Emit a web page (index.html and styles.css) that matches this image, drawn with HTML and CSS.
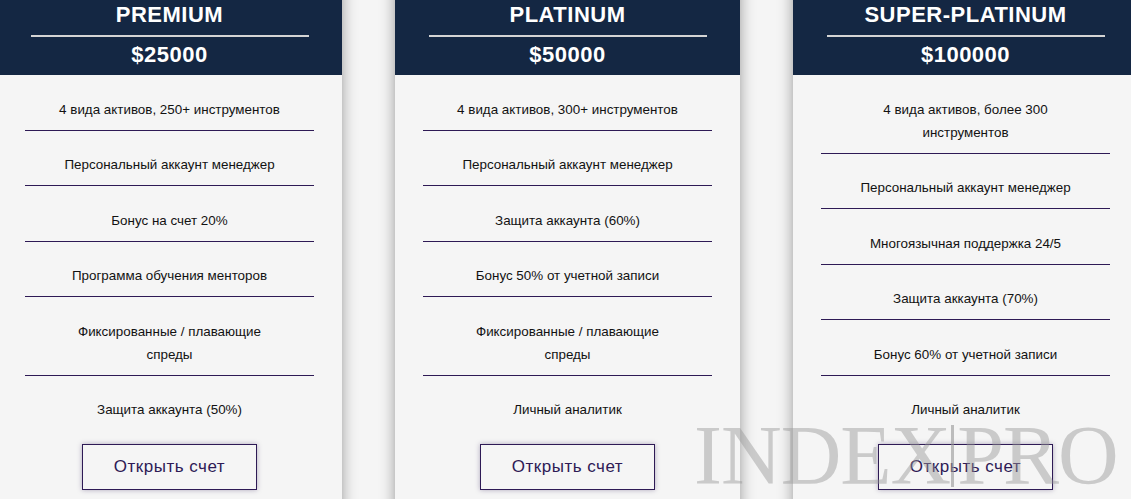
FILE: index.html
```html
<!DOCTYPE html>
<html lang="ru">
<head>
<meta charset="utf-8">
<title>Тарифы</title>
<link rel="stylesheet" href="styles.css">
</head>
<body>
<div class="plans">
  <section class="card">
    <header class="card-head">
      <h2 class="card-title">PREMIUM</h2>
      <div class="card-price">$25000</div>
    </header>
    <ul class="features">
      <li>4 вида активов, 250+ инструментов</li>
      <li>Персональный аккаунт менеджер</li>
      <li>Бонус на счет 20%</li>
      <li>Программа обучения менторов</li>
      <li>Фиксированные / плавающие<br>спреды</li>
      <li>Защита аккаунта (50%)</li>
    </ul>
    <a class="btn" href="#">Открыть счет</a>
  </section>
  <section class="card">
    <header class="card-head">
      <h2 class="card-title">PLATINUM</h2>
      <div class="card-price">$50000</div>
    </header>
    <ul class="features">
      <li>4 вида активов, 300+ инструментов</li>
      <li>Персональный аккаунт менеджер</li>
      <li>Защита аккаунта (60%)</li>
      <li>Бонус 50% от учетной записи</li>
      <li>Фиксированные / плавающие<br>спреды</li>
      <li>Личный аналитик</li>
    </ul>
    <a class="btn" href="#">Открыть счет</a>
  </section>
  <section class="card">
    <header class="card-head">
      <h2 class="card-title">SUPER-PLATINUM</h2>
      <div class="card-price">$100000</div>
    </header>
    <ul class="features">
      <li>4 вида активов, более 300<br>инструментов</li>
      <li>Персональный аккаунт менеджер</li>
      <li>Многоязычная поддержка 24/5</li>
      <li>Защита аккаунта (70%)</li>
      <li>Бонус 60% от учетной записи</li>
      <li>Личный аналитик</li>
    </ul>
    <a class="btn" href="#">Открыть счет</a>
  </section>
</div>
<div class="watermark">INDEX<span class="wm-bar"></span>PRO</div>
</body>
</html>
```
FILE: styles.css
```css
html, body {
  margin: 0;
  padding: 0;
}
body {
  background: #f5f5f5;
  font-family: "Liberation Sans", Arial, sans-serif;
  overflow: hidden;
  width: 1131px;
  height: 499px;
  position: relative;
}
.plans {
  display: flex;
  gap: 53px;
  margin-left: -3px;
  margin-top: -20px;
}
.card {
  flex: 0 0 345px;
  width: 345px;
  background: #f5f5f5;
  box-shadow: 0 0 14px rgba(0, 0, 0, 0.38);
  display: flex;
  flex-direction: column;
  align-items: center;
  padding-bottom: 30px;
}
.card-head {
  align-self: stretch;
  background: #142743;
  color: #ffffff;
  text-align: center;
  padding: 22px 0 7px;
  display: flex;
  flex-direction: column;
  align-items: center;
}
.card-title {
  margin: 0;
  font-size: 22px;
  line-height: 26px;
  font-weight: 700;
  letter-spacing: 0.5px;
  width: 278px;
  padding-bottom: 7px;
  border-bottom: 2px solid #d4d4d4;
}
.card-price {
  font-size: 22px;
  line-height: 26px;
  font-weight: 700;
  letter-spacing: 0.5px;
  margin-top: 5px;
}
.features {
  list-style: none;
  margin: 0;
  padding: 0 28px;
  align-self: stretch;
}
.features li {
  text-align: center;
  font-size: 13.4px;
  line-height: 23px;
  color: #121212;
  padding: 22.5px 0 9px;
  border-bottom: 1px solid #2e1a55;
}
.features li:last-child {
  border-bottom: none;
}
.btn {
  margin-top: 14px;
  width: 175px;
  height: 46px;
  box-sizing: border-box;
  border: 1px solid #2e1a55;
  box-shadow: 0 0 5px rgba(46, 26, 85, 0.35);
  display: flex;
  align-items: center;
  justify-content: center;
  color: #2e1a55;
  font-size: 17px;
  letter-spacing: 0.5px;
  text-decoration: none;
}
.watermark {
  position: absolute;
  left: 694px;
  top: 408px;
  font-family: "Liberation Serif", "Times New Roman", serif;
  font-size: 84px;
  line-height: 96px;
  letter-spacing: -1px;
  color: rgba(150, 150, 150, 0.45);
  white-space: nowrap;
  pointer-events: none;
}
.wm-bar {
  display: inline-block;
  width: 3px;
  height: 62px;
  background: rgba(150, 150, 150, 0.6);
  margin: 0 3px 0 1px;
  vertical-align: -3px;
}
```
